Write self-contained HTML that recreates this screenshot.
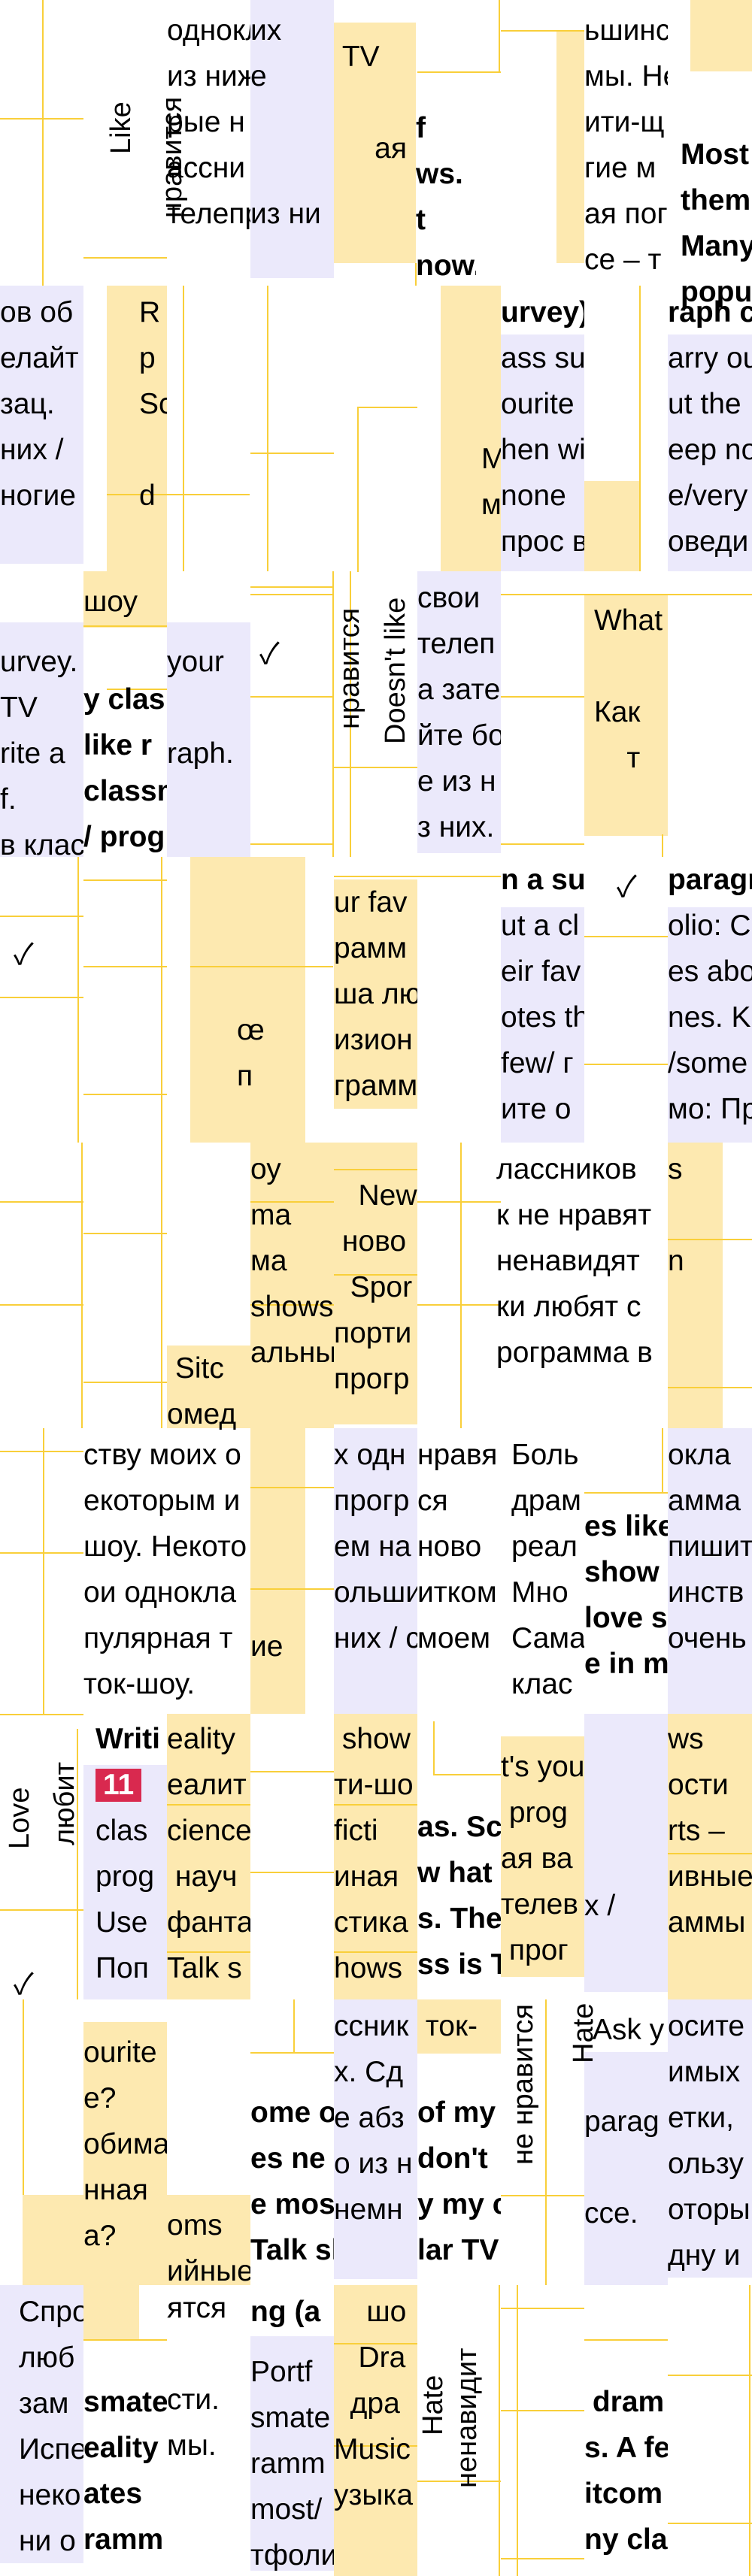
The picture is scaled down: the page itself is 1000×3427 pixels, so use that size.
<!DOCTYPE html>
<html><head><meta charset="utf-8"><style>
*{margin:0;padding:0;box-sizing:border-box}
html,body{width:1000px;height:3427px;background:#fff;overflow:hidden}
body{position:relative;font-family:"Liberation Sans","Noto Sans CJK SC",sans-serif;color:#000}
.y{position:absolute;background:#fde9b0}
.l{position:absolute;background:#ebe9fb}
.h{position:absolute;height:2px;background:#f9cf3a}
.v{position:absolute;width:2px;background:#f9cf3a}
.t{position:absolute;overflow:hidden;white-space:nowrap;font-size:39px;line-height:61px}
.b{font-weight:bold}
.r{position:absolute;white-space:nowrap;font-size:38px;transform-origin:0 0;transform:rotate(-90deg)}
.badge{display:inline-block;background:#d9294f;color:#fff;font-weight:bold;padding:0 10px;line-height:44px}
</style></head><body>

<!-- ROW 0 -->
<div class="v" style="left:56px;top:0;height:500px"></div>
<div class="h" style="left:0;top:157px;width:111px"></div>
<div class="h" style="left:0;top:415px;width:111px"></div>
<div class="h" style="left:111px;top:342px;width:111px"></div>
<div class="l" style="left:333px;top:0;width:111px;height:370px"></div>
<div class="y" style="left:444px;top:30px;width:109px;height:320px"></div>
<div class="h" style="left:555px;top:95px;width:111px"></div>
<div class="v" style="left:663px;top:0;height:95px"></div>
<div class="h" style="left:666px;top:40px;width:111px"></div>
<div class="y" style="left:740px;top:42px;width:37px;height:308px"></div>
<div class="y" style="left:918px;top:0;width:82px;height:95px"></div>
<div class="v" style="left:552px;top:350px;height:30px"></div>
<div class="r" style="left:140px;top:205px">Like</div>
<div class="r" style="left:208px;top:290px">нравится</div>
<div class="t" style="left:222px;top:10px;width:111px">однокл<br>из ниж<br>рые н<br>ассни<br>телепр</div>
<div class="t" style="left:333px;top:10px;width:111px">их<br>е<br><br><br>из ни</div>
<div class="t" style="left:444px;top:45px;width:109px">&nbsp;TV<br><br>&nbsp;&nbsp;&nbsp;&nbsp;&nbsp;ая</div>
<div class="t b" style="left:553px;top:140px;width:80px">f<br>ws.<br>t<br>now.</div>
<div class="t" style="left:777px;top:10px;width:111px">ьшинс<br>мы. Не<br>ити-щ<br>гие м<br>ая пог<br>се – т</div>
<div class="t b" style="left:905px;top:175px;width:95px">Most<br>them<br>Many<br>popu</div>

<!-- ROW 1 (380) -->
<div class="l" style="left:0;top:380px;width:111px;height:370px"></div>
<div class="y" style="left:142px;top:380px;width:80px;height:380px"></div>
<div class="v" style="left:243px;top:380px;height:380px"></div>
<div class="h" style="left:142px;top:657px;width:190px"></div>
<div class="h" style="left:142px;top:916px;width:190px"></div>
<div class="v" style="left:355px;top:380px;height:380px"></div>
<div class="h" style="left:333px;top:602px;width:111px"></div>
<div class="h" style="left:333px;top:780px;width:111px"></div>
<div class="v" style="left:475px;top:541px;height:220px"></div>
<div class="h" style="left:475px;top:541px;width:80px"></div>
<div class="y" style="left:586px;top:380px;width:80px;height:380px"></div>
<div class="l" style="left:666px;top:445px;width:111px;height:315px"></div>
<div class="y" style="left:777px;top:640px;width:73px;height:120px"></div>
<div class="v" style="left:850px;top:380px;height:380px"></div>
<div class="l" style="left:888px;top:445px;width:112px;height:315px"></div>
<div class="t" style="left:0;top:385px;width:111px">ов об<br>елайт<br>зац.<br>них /<br>ногие</div>
<div class="t" style="left:185px;top:385px;width:37px">R<br>p<br>Sc<br><br>d</div>
<div class="t" style="left:640px;top:580px;width:26px">M<br>му</div>
<div class="t" style="left:666px;top:385px;width:111px"><b>urvey)</b><br>ass su<br>ourite<br>hen wi<br>none<br>прос в</div>
<div class="t" style="left:888px;top:385px;width:112px"><b>raph c</b><br>arry ou<br>ut the<br>eep no<br>e/very<br>оведи</div>

<!-- ROW 2 (760) -->
<div class="y" style="left:111px;top:760px;width:111px;height:75px"></div>
<div class="h" style="left:111px;top:832px;width:111px"></div>
<div class="l" style="left:0;top:828px;width:111px;height:312px"></div>
<div class="l" style="left:222px;top:828px;width:111px;height:312px"></div>
<div class="h" style="left:333px;top:790px;width:111px"></div>
<div class="h" style="left:333px;top:926px;width:111px"></div>
<div class="h" style="left:333px;top:1122px;width:111px"></div>
<div class="v" style="left:442px;top:760px;height:380px"></div>
<div class="v" style="left:465px;top:760px;height:380px"></div>
<div class="h" style="left:444px;top:1020px;width:111px"></div>
<div class="l" style="left:555px;top:760px;width:111px;height:375px"></div>
<div class="h" style="left:666px;top:790px;width:111px"></div>
<div class="h" style="left:666px;top:926px;width:111px"></div>
<div class="h" style="left:666px;top:1122px;width:111px"></div>
<div class="y" style="left:777px;top:792px;width:111px;height:320px"></div>
<div class="h" style="left:777px;top:790px;width:223px"></div>
<div class="v" style="left:880px;top:1110px;height:30px"></div>
<div class="t" style="left:0;top:850px;width:111px">urvey.<br>TV<br>rite a<br>f.<br>в клас</div>
<div class="t" style="left:111px;top:770px;width:111px">шоу</div>
<div class="t b" style="left:111px;top:900px;width:111px">y clas<br>like r<br>classm<br>/ progr</div>
<div class="t" style="left:222px;top:850px;width:111px">your<br><br>raph.</div>
<div class="t" style="left:345px;top:840px;width:60px">✓</div>
<div class="r" style="left:444px;top:970px">нравится</div>
<div class="r" style="left:505px;top:990px">Doesn't like</div>
<div class="t" style="left:555px;top:765px;width:111px">свои<br>телеп<br>а зате<br>йте бо<br>е из н<br>з них.</div>
<div class="t" style="left:790px;top:795px;width:98px">What<br><br>Как<br>&nbsp;&nbsp;&nbsp;&nbsp;т</div>

<!-- ROW 3 (1140) -->
<div class="v" style="left:103px;top:1140px;height:380px"></div>
<div class="h" style="left:0;top:1218px;width:111px"></div>
<div class="h" style="left:0;top:1326px;width:111px"></div>
<div class="h" style="left:111px;top:1170px;width:111px"></div>
<div class="h" style="left:111px;top:1285px;width:111px"></div>
<div class="h" style="left:111px;top:1455px;width:111px"></div>
<div class="v" style="left:214px;top:1140px;height:380px"></div>
<div class="y" style="left:253px;top:1140px;width:153px;height:380px"></div>
<div class="h" style="left:253px;top:1285px;width:190px"></div>
<div class="y" style="left:444px;top:1170px;width:111px;height:305px"></div>
<div class="h" style="left:444px;top:1165px;width:222px"></div>
<div class="l" style="left:666px;top:1207px;width:111px;height:313px"></div>
<div class="h" style="left:777px;top:1245px;width:111px"></div>
<div class="h" style="left:777px;top:1415px;width:111px"></div>
<div class="l" style="left:888px;top:1207px;width:112px;height:313px"></div>
<div class="t" style="left:18px;top:1240px;width:60px">✓</div>
<div class="t" style="left:315px;top:1340px;width:60px">œ<br>п</div>
<div class="t" style="left:444px;top:1170px;width:111px">ur fav<br>рамм<br>ша лю<br>изион<br>грамм</div>
<div class="t" style="left:666px;top:1140px;width:111px"><b>n a su</b><br>ut a cl<br>eir fav<br>otes th<br>few/ г<br>ите о</div>
<div class="t" style="left:820px;top:1150px;width:60px">✓</div>
<div class="t" style="left:888px;top:1140px;width:112px"><b>paragr</b><br>olio: C<br>es abo<br>nes. K<br>/some<br>мо: Пр</div>

<!-- ROW 4 (1520) -->
<div class="v" style="left:108px;top:1520px;height:380px"></div>
<div class="h" style="left:0;top:1598px;width:111px"></div>
<div class="h" style="left:0;top:1735px;width:111px"></div>
<div class="h" style="left:111px;top:1640px;width:111px"></div>
<div class="h" style="left:111px;top:1838px;width:111px"></div>
<div class="v" style="left:214px;top:1520px;height:380px"></div>
<div class="y" style="left:222px;top:1790px;width:111px;height:110px"></div>
<div class="y" style="left:333px;top:1520px;width:111px;height:380px"></div>
<div class="h" style="left:333px;top:1598px;width:111px"></div>
<div class="h" style="left:333px;top:1735px;width:111px"></div>
<div class="y" style="left:444px;top:1520px;width:111px;height:375px"></div>
<div class="h" style="left:444px;top:1555px;width:111px"></div>
<div class="h" style="left:444px;top:1695px;width:111px"></div>
<div class="h" style="left:555px;top:1598px;width:111px"></div>
<div class="h" style="left:555px;top:1735px;width:111px"></div>
<div class="v" style="left:612px;top:1520px;height:380px"></div>
<div class="y" style="left:888px;top:1520px;width:73px;height:380px"></div>
<div class="h" style="left:888px;top:1648px;width:112px"></div>
<div class="h" style="left:888px;top:1845px;width:112px"></div>
<div class="t" style="left:333px;top:1525px;width:111px">оу<br>ma<br>ма<br>shows<br>альны</div>
<div class="t" style="left:444px;top:1560px;width:111px">&nbsp;&nbsp;&nbsp;New<br>&nbsp;ново<br>&nbsp;&nbsp;Spor<br>порти<br>прогр</div>
<div class="t" style="left:660px;top:1525px;width:228px">лассников<br>к не нравят<br>ненавидят<br>ки любят с<br>рограмма в</div>
<div class="t" style="left:888px;top:1525px;width:73px">s<br><br>n</div>
<div class="t" style="left:222px;top:1790px;width:111px">&nbsp;Sitc<br>омед</div>

<!-- ROW 5 (1900) -->
<div class="v" style="left:57px;top:1900px;height:380px"></div>
<div class="h" style="left:0;top:1930px;width:111px"></div>
<div class="h" style="left:0;top:2065px;width:111px"></div>
<div class="y" style="left:333px;top:1900px;width:73px;height:380px"></div>
<div class="h" style="left:333px;top:1978px;width:111px"></div>
<div class="h" style="left:333px;top:2113px;width:111px"></div>
<div class="l" style="left:444px;top:1900px;width:111px;height:380px"></div>
<div class="l" style="left:888px;top:1900px;width:112px;height:380px"></div>
<div class="h" style="left:777px;top:1985px;width:111px"></div>
<div class="v" style="left:880px;top:1900px;height:85px"></div>
<div class="t" style="left:111px;top:1905px;width:222px">ству моих о<br>екоторым и<br>шоу. Некото<br>ои однокла<br>пулярная т<br>ток-шоу.</div>
<div class="t" style="left:333px;top:2160px;width:73px">ие</div>
<div class="t" style="left:444px;top:1905px;width:111px">х одн<br>прогр<br>ем на<br>ольши<br>них / с</div>
<div class="t" style="left:555px;top:1905px;width:111px">нравя<br>ся<br>ново<br>итком<br>моем</div>
<div class="t" style="left:680px;top:1905px;width:97px">Боль<br>драм<br>реал<br>Мно<br>Сама<br>клас</div>
<div class="t b" style="left:777px;top:2000px;width:111px">es like<br>show<br>love s<br>e in m</div>
<div class="t" style="left:888px;top:1905px;width:112px">окла<br>амма<br>пишит<br>инств<br>очень</div>

<!-- ROW 6 (2280) -->
<div class="h" style="left:0;top:2280px;width:111px"></div>
<div class="h" style="left:0;top:2540px;width:111px"></div>
<div class="v" style="left:102px;top:2300px;height:360px"></div>
<div class="l" style="left:111px;top:2348px;width:111px;height:312px"></div>
<div class="y" style="left:222px;top:2280px;width:111px;height:380px"></div>
<div class="h" style="left:222px;top:2400px;width:111px"></div>
<div class="h" style="left:222px;top:2596px;width:111px"></div>
<div class="h" style="left:333px;top:2356px;width:111px"></div>
<div class="h" style="left:333px;top:2490px;width:111px"></div>
<div class="y" style="left:333px;top:2260px;width:73px;height:20px"></div>
<div class="y" style="left:444px;top:2280px;width:111px;height:380px"></div>
<div class="h" style="left:444px;top:2400px;width:111px"></div>
<div class="h" style="left:444px;top:2596px;width:111px"></div>
<div class="v" style="left:576px;top:2290px;height:72px"></div>
<div class="h" style="left:576px;top:2360px;width:90px"></div>
<div class="y" style="left:666px;top:2310px;width:111px;height:320px"></div>
<div class="l" style="left:777px;top:2280px;width:111px;height:370px"></div>
<div class="y" style="left:888px;top:2280px;width:112px;height:380px"></div>
<div class="h" style="left:888px;top:2465px;width:112px"></div>
<div class="r" style="left:5px;top:2460px">Love</div>
<div class="r" style="left:65px;top:2455px">любит</div>
<div class="t" style="left:18px;top:2610px;width:60px">✓</div>
<div class="t" style="left:111px;top:2283px;width:111px;padding-left:16px"><b>Writi</b><br><span class="badge">11</span><br>clas<br>prog<br>Use<br>Поп</div>
<div class="t" style="left:222px;top:2283px;width:111px">eality<br>еалит<br>cience<br>&nbsp;науч<br>фанта<br>Talk s</div>
<div class="t" style="left:444px;top:2283px;width:111px">&nbsp;show<br>ти-шо<br>ficti<br>иная<br>стика<br>hows</div>
<div class="t b" style="left:555px;top:2400px;width:111px">as. Sc<br>w hat<br>s. The<br>ss is T</div>
<div class="t" style="left:666px;top:2320px;width:111px">t's you<br>&nbsp;prog<br>ая ва<br>телев<br>&nbsp;прог</div>
<div class="t" style="left:777px;top:2505px;width:111px">x /</div>
<div class="t" style="left:888px;top:2283px;width:112px">ws<br>ости<br>rts –<br>ивные<br>аммы</div>

<!-- ROW 7 (2660) -->
<div class="v" style="left:30px;top:2660px;height:380px"></div>
<div class="y" style="left:30px;top:2920px;width:81px;height:120px"></div>
<div class="y" style="left:111px;top:2690px;width:111px;height:350px"></div>
<div class="y" style="left:222px;top:2920px;width:111px;height:120px"></div>
<div class="v" style="left:390px;top:2660px;height:70px"></div>
<div class="h" style="left:333px;top:2730px;width:111px"></div>
<div class="l" style="left:444px;top:2660px;width:111px;height:372px"></div>
<div class="y" style="left:555px;top:2660px;width:111px;height:72px"></div>
<div class="h" style="left:666px;top:2920px;width:111px"></div>
<div class="v" style="left:725px;top:2660px;height:380px"></div>
<div class="l" style="left:777px;top:2730px;width:111px;height:310px"></div>
<div class="l" style="left:888px;top:2660px;width:112px;height:370px"></div>
<div class="t" style="left:111px;top:2700px;width:111px">ourite<br>e?<br>обима<br>нная<br>а?</div>
<div class="t" style="left:222px;top:2930px;width:111px">oms<br>ийные</div>
<div class="t b" style="left:333px;top:2780px;width:111px">ome o<br>es ne<br>e mos<br>Talk sh</div>
<div class="t" style="left:444px;top:2665px;width:111px">ссник<br>х. Сд<br>е абз<br>о из н<br>немн</div>
<div class="t" style="left:555px;top:2665px;width:111px">&nbsp;ток-</div>
<div class="t b" style="left:555px;top:2780px;width:111px">of my<br>don't<br>y my c<br>lar TV</div>
<div class="r" style="left:675px;top:2880px">не нравится</div>
<div class="r" style="left:755px;top:2745px">Hate</div>
<div class="t" style="left:777px;top:2670px;width:111px">&nbsp;Ask y<br><br>parag<br><br>ссе.</div>
<div class="t" style="left:888px;top:2665px;width:112px">осите<br>имых<br>етки,<br>ользу<br>оторы<br>дну и</div>

<!-- ROW 8 (3040) -->
<div class="l" style="left:0;top:3040px;width:111px;height:370px"></div>
<div class="y" style="left:111px;top:3040px;width:74px;height:72px"></div>
<div class="h" style="left:111px;top:3112px;width:111px"></div>
<div class="l" style="left:333px;top:3108px;width:111px;height:312px"></div>
<div class="y" style="left:444px;top:3040px;width:111px;height:387px"></div>
<div class="h" style="left:444px;top:3117px;width:111px"></div>
<div class="h" style="left:444px;top:3253px;width:111px"></div>
<div class="h" style="left:555px;top:3300px;width:111px"></div>
<div class="v" style="left:663px;top:3040px;height:387px"></div>
<div class="v" style="left:687px;top:3040px;height:387px"></div>
<div class="h" style="left:666px;top:3070px;width:111px"></div>
<div class="h" style="left:666px;top:3206px;width:111px"></div>
<div class="h" style="left:666px;top:3403px;width:111px"></div>
<div class="h" style="left:777px;top:3112px;width:111px"></div>
<div class="h" style="left:888px;top:3159px;width:112px"></div>
<div class="h" style="left:888px;top:3356px;width:112px"></div>
<div class="v" style="left:996px;top:3040px;height:387px"></div>
<div class="t" style="left:25px;top:3045px;width:86px">Спро<br>люб<br>зам<br>Испе<br>неко<br>ни о</div>
<div class="t b" style="left:111px;top:3165px;width:111px">smate<br>eality<br>ates<br>ramm</div>
<div class="t" style="left:222px;top:3040px;width:111px">ятся<br><br>сти.<br>мы.</div>
<div class="t b" style="left:333px;top:3045px;width:111px">ng (a</div>
<div class="t" style="left:333px;top:3125px;width:111px">Portf<br>smate<br>ramm<br>most/<br>тфоли</div>
<div class="t" style="left:444px;top:3045px;width:111px">&nbsp;&nbsp;&nbsp;&nbsp;шо<br>&nbsp;&nbsp;&nbsp;Dra<br>&nbsp;&nbsp;дра<br>Music<br>узыка</div>
<div class="r" style="left:555px;top:3240px">Hate</div>
<div class="r" style="left:600px;top:3310px">ненавидит</div>
<div class="t b" style="left:777px;top:3165px;width:111px">&nbsp;dram<br>s. A fe<br>itcom<br>ny clas</div>
</body></html>
